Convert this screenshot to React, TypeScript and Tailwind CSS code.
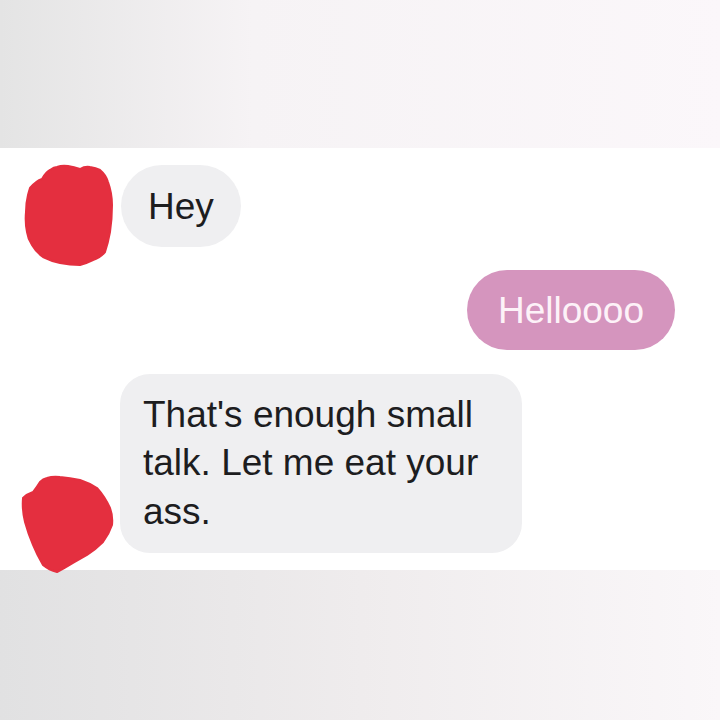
export default function App() {
  return (
    <div className="flex h-[720px] w-[720px] flex-col overflow-hidden bg-white font-['Liberation_Sans',Arial,sans-serif] text-[#1d1d1f]">
      {/* top strip */}
      <div className="h-[148px] bg-gradient-to-r from-[#e4e4e4] via-[#f6f3f5] via-35% to-[#fbf7fa]" />

      {/* chat */}
      <div className="flex h-[422px] flex-col gap-[23px] pt-[17px]">
        <div className="flex items-start">
          <div className="relative h-[82px] w-[121px] shrink-0">
            <svg className="absolute left-0 top-[-2px] overflow-visible" width="120" height="106" viewBox="0 0 120 106">
              <path
                d="M30 25 Q36 18 42 16 Q46 9 50 7 Q54 4 57 4 Q62 2 68 3 Q74 4 80 6 Q85 3 90 4 Q96 5 100 7 Q106 12 108 19 Q112 30 112 42 Q112 56 110 69 Q108 80 105 89 Q100 95 93 97 Q87 100 80 102 Q70 102 60 100 Q51 98 43 94 Q36 89 32 82 Q28 76 27 69 Q25 59 26 49 Q26 40 28 32 Q29 28 30 25 Z"
                fill="#e42f3f"
                stroke="#e42f3f"
                strokeWidth="2"
                strokeLinejoin="round"
              />
            </svg>
          </div>
          <div className="flex h-[82px] items-center rounded-full bg-[#efeff1] px-[27px] text-[37px] leading-none">
            Hey
          </div>
        </div>

        <div className="flex justify-end pr-[45px]">
          <div className="flex h-[80px] items-center rounded-full bg-[#d595be] px-[31px] text-[37px] leading-none text-[#fdf2f8]">
            Helloooo
          </div>
        </div>

        <div className="flex items-end">
          <div className="relative h-[180px] w-[120px] shrink-0">
            <svg className="absolute bottom-[-20px] left-0 overflow-visible" width="120" height="100" viewBox="0 0 120 100">
              <path
                d="M40 9 Q43 6 47 5 Q53 3 60 4 Q70 5 80 7 Q89 10 97 15 Q105 24 110 35 Q113 43 112 52 Q109 61 103 69 Q96 76 87 82 Q80 86 73 90 Q65 95 57 99 Q49 97 43 92 Q37 82 33 72 Q28 60 25 49 Q22 37 23 25 Q27 21 33 19 Q37 14 40 9 Z"
                fill="#e42f3f"
                stroke="#e42f3f"
                strokeWidth="2"
                strokeLinejoin="round"
              />
            </svg>
          </div>
          <div className="w-[402px] rounded-[30px] bg-[#efeff1] py-[17px] pl-[23px] pr-[20px] text-[37px] leading-[48.5px]">
            That's enough small talk. Let me eat your ass.
          </div>
        </div>
      </div>

      {/* bottom strip */}
      <div className="flex-1 bg-gradient-to-r from-[#e1e1e2] via-[#efeced] via-50% to-[#faf7f9]" />
    </div>
  )
}
